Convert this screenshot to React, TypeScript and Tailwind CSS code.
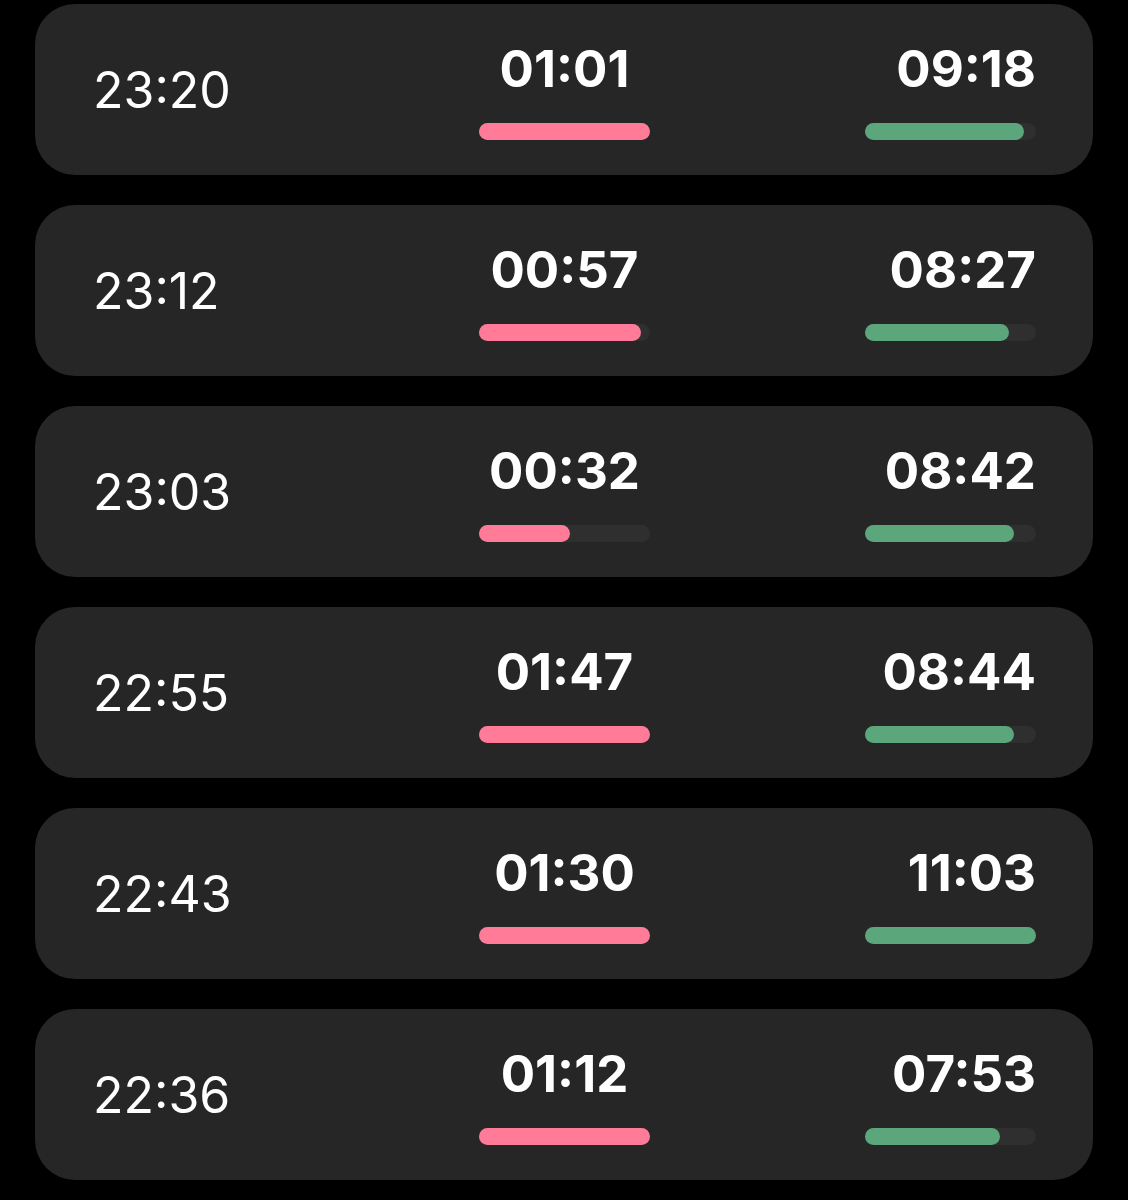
import React from "react";

type Row = {
  time: string;
  first: string;
  firstPct: number;
  second: string;
  secondPct: number;
};

const rows: Row[] = [
  { time: "23:20", first: "01:01", firstPct: 100, second: "09:18", secondPct: 93 },
  { time: "23:12", first: "00:57", firstPct: 95, second: "08:27", secondPct: 84 },
  { time: "23:03", first: "00:32", firstPct: 53, second: "08:42", secondPct: 87 },
  { time: "22:55", first: "01:47", firstPct: 100, second: "08:44", secondPct: 87 },
  { time: "22:43", first: "01:30", firstPct: 100, second: "11:03", secondPct: 100 },
  { time: "22:36", first: "01:12", firstPct: 100, second: "07:53", secondPct: 79 },
];

function Bar({ pct, color }: { pct: number; color: string }) {
  return (
    <div className="h-[17px] w-[171px] rounded-full bg-[#2f2f2f]">
      <div className={`h-full rounded-full ${color}`} style={{ width: `${pct}%` }} />
    </div>
  );
}

export default function App() {
  return (
    <div
      className="min-h-[1200px] bg-black px-[35px] pt-[4px] flex flex-col gap-[30px]"
      style={{ fontFamily: "Inter, 'Liberation Sans', sans-serif" }}
    >
      {rows.map((r) => (
        <div
          key={r.time}
          className="h-[171px] w-[1058px] rounded-[40px] bg-[#262626] pl-[58px] pr-[57px] grid grid-cols-[1fr_171px_1fr] items-center text-white"
        >
          <div className="text-[50px] leading-[60px] font-normal">{r.time}</div>

          <div className="flex flex-col items-center">
            <div className="text-[51px] leading-[60px] font-bold">{r.first}</div>
            <div className="mt-[24px]">
              <Bar pct={r.firstPct} color="bg-[#ff7b98]" />
            </div>
          </div>

          <div className="flex flex-col items-end">
            <div className="text-[51px] leading-[60px] font-bold">{r.second}</div>
            <div className="mt-[24px]">
              <Bar pct={r.secondPct} color="bg-[#5ba77b]" />
            </div>
          </div>
        </div>
      ))}
    </div>
  );
}
